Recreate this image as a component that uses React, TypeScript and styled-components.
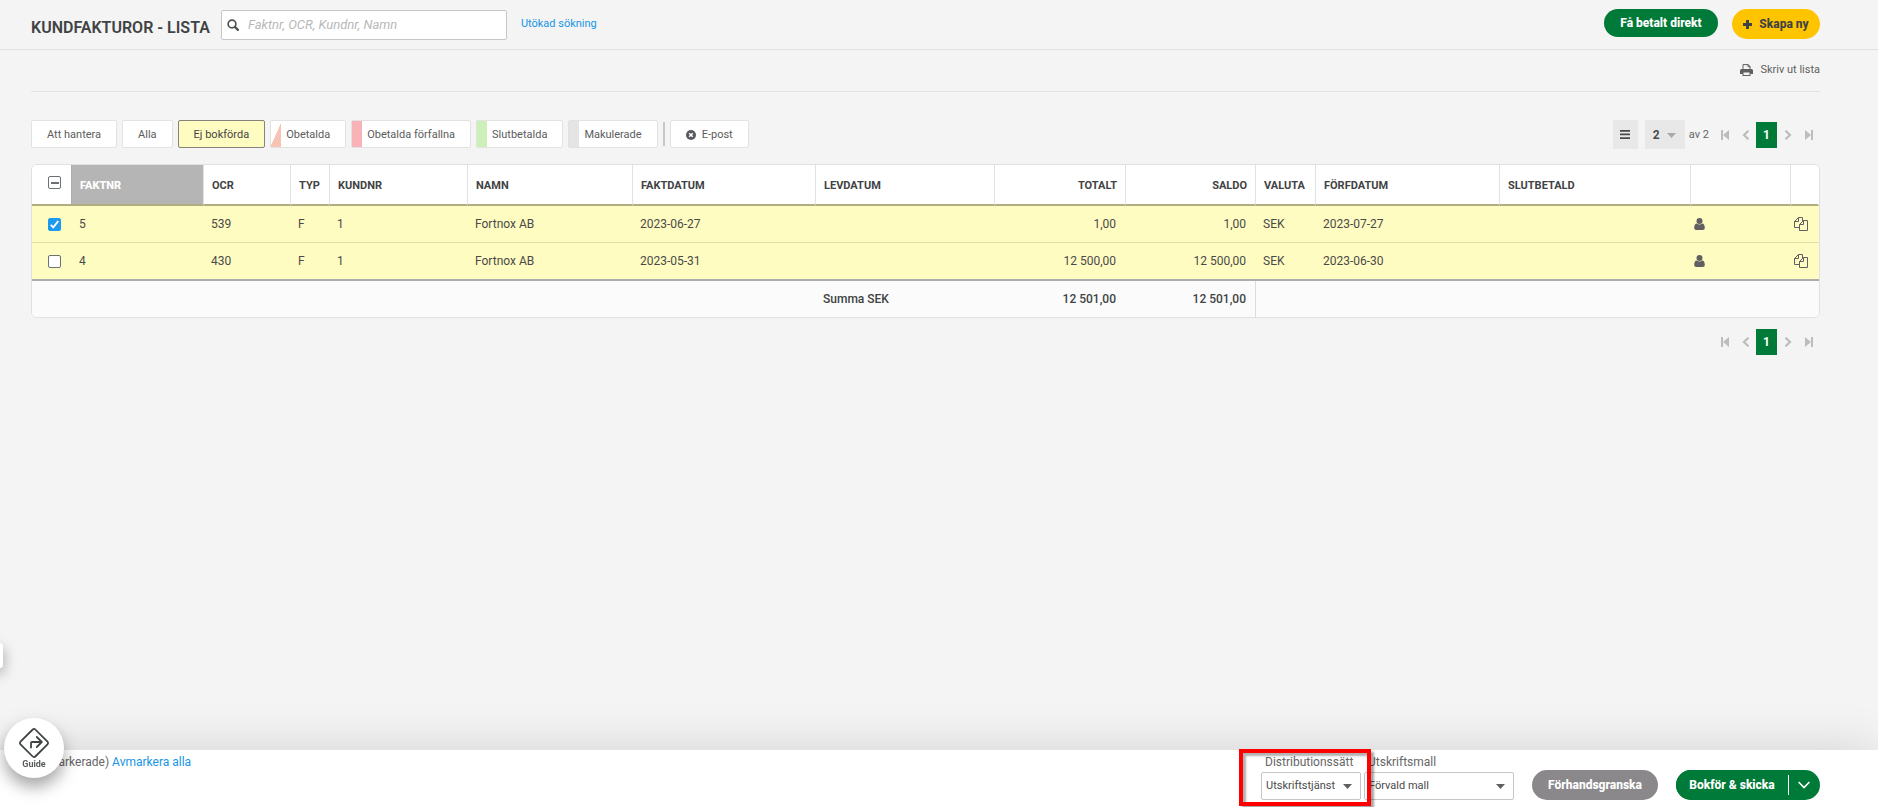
import React from 'react';
import styled, { createGlobalStyle, css } from 'styled-components';

const GlobalStyle = createGlobalStyle`
  *, *::before, *::after { box-sizing: border-box; }
  body {
    margin: 0;
    background: #f4f4f4;
    color: #4a4a4a;
    font-family: Roboto, "Liberation Sans", sans-serif;
    font-size: 12px;
    line-height: 16px;
  }
  button, input, select { font: inherit; color: inherit; margin: 0; }
  button { cursor: pointer; }
  a { color: #1795e6; text-decoration: none; }
  svg { display: block; flex: none; }
`;

const Page = styled.div`
  min-height: 100vh;
  display: flex;
  flex-direction: column;
  overflow-x: clip;
`;

const TopBar = styled.header`
  display: flex;
  align-items: flex-start;
  height: 50px;
  padding: 9px 58px 0 31px;
  border-bottom: 1px solid #e2e2e2;
`;

const Title = styled.h1`
  margin: 9px 11px 0 0;
  font-size: 16px;
  line-height: 20px;
  font-weight: 600;
  color: #3f4344;
  white-space: nowrap;
`;

const SearchBox = styled.label`
  display: flex;
  align-items: center;
  gap: 9px;
  width: 286px;
  height: 30px;
  margin-top: 1px;
  padding: 0 5px;
  background: #fff;
  border: 1px solid #c6c6c6;
  border-radius: 2px;
  color: #4f5354;
`;

const SearchInput = styled.input`
  flex: 1;
  min-width: 0;
  padding: 0;
  border: 0;
  outline: 0;
  background: none;
  font-size: 13px;
  &::placeholder { color: #b9b9b9; font-style: italic; opacity: 1; }
`;

const AdvancedLink = styled.a`
  margin: 7px auto 0 14px;
  font-size: 11px;
`;

const Actions = styled.div`
  display: flex;
  align-items: flex-start;
  gap: 14px;
`;

const tones = {
  green: css`background: #007a38; color: #fff;`,
  yellow: css`background: #ffc400; color: #3f4344;`,
  grey: css`background: #8a888b; color: #fff;`,
};

const Pill = styled.button<{ $tone: keyof typeof tones; $width: number; $small?: boolean }>`
  display: inline-flex;
  align-items: center;
  justify-content: center;
  gap: 7px;
  height: ${p => (p.$small ? 28 : 30)}px;
  min-width: ${p => p.$width}px;
  padding: 0 8px;
  border: 0;
  border-radius: 15px;
  font-size: 12px;
  font-weight: 800;
  white-space: nowrap;
  ${p => tones[p.$tone]}
`;

const Content = styled.main`
  flex: 1;
  padding: 0 58px 40px 31px;
`;

const Tools = styled.div`
  display: flex;
  justify-content: flex-end;
  height: 42px;
  padding-top: 12px;
  border-bottom: 1px solid #e2e2e2;
`;

const PrintButton = styled.button`
  display: flex;
  align-items: center;
  gap: 7px;
  height: 16px;
  padding: 0;
  border: 0;
  background: none;
  font-size: 11px;
  color: #5f5f5f;
`;

const FilterRow = styled.div`
  display: flex;
  justify-content: space-between;
  align-items: flex-start;
  padding: 28px 0 15px;
`;

const Filters = styled.div`
  display: flex;
  align-items: center;
  gap: 5px;
`;

const FilterButton = styled.button<{ $active?: boolean; $mark?: string }>`
  display: flex;
  align-items: center;
  justify-content: center;
  gap: 6px;
  height: 28px;
  padding: 2px 15px 0;
  border: 1px solid ${p => (p.$active ? '#85837c' : '#e2e2e2')};
  border-radius: 2px;
  background: ${p => (p.$active ? '#fffcc1' : '#fff')};
  color: ${p => (p.$active ? '#444' : '#5c5c5c')};
  font-size: 11px;
  white-space: nowrap;
  ${p => p.$mark && css`
    background: ${p.$mark} left bottom / 10px 100% no-repeat, #fff;
  `}
`;

const FilterDivider = styled.span`
  width: 2px;
  height: 24px;
  background: #c8c8c8;
`;

const PagerRow = styled.div`
  display: flex;
  align-items: center;
  height: 29px;
`;

const BottomPager = styled(PagerRow)`
  justify-content: flex-end;
  margin-top: 9px;
`;

const Square = styled.button`
  display: grid;
  place-items: center;
  width: 25px;
  height: 29px;
  margin-right: 7px;
  padding: 0;
  border: 0;
  background: #e8e8e8;
`;

const SelectWrap = styled.span<{ $width: number }>`
  position: relative;
  display: block;
  width: ${p => p.$width}px;
  > svg { position: absolute; right: 9px; top: 50%; margin-top: -2px; pointer-events: none; }
`;

const PageSelect = styled.select`
  appearance: none;
  display: block;
  width: 100%;
  height: 29px;
  padding: 0 8px;
  border: 0;
  border-radius: 0;
  background: #e8e8e8;
  font-weight: 700;
`;

const OfTotal = styled.span`
  margin: 0 5px 0 4px;
  font-size: 11px;
  color: #666;
`;

const PagerButton = styled.button<{ $current?: boolean }>`
  display: grid;
  place-items: center;
  width: 21px;
  height: 26px;
  padding: 0;
  border: 0;
  background: ${p => (p.$current ? '#007a38' : 'none')};
  color: ${p => (p.$current ? '#fff' : '#bdbdbd')};
  font-weight: 700;
`;

const PagerGroup = styled.nav`
  display: flex;
  align-items: center;
  margin-right: 1px;
`;

const TableFrame = styled.div`
  border: 1px solid #e0e0e0;
  border-radius: 6px;
  overflow: hidden;
`;

const Table = styled.table`
  width: 100%;
  table-layout: fixed;
  border-collapse: separate;
  border-spacing: 0;
  background: #fff;
`;

const Th = styled.th<{ $right?: boolean; $sorted?: boolean; $edge?: string }>`
  height: 41px;
  padding: 2px 8px 0;
  border-bottom: 2px solid #b0ad7e;
  border-right: 1px solid ${p => p.$edge ?? '#e2e2e2'};
  background: ${p => (p.$sorted ? '#b5b5b5' : '#fff')};
  color: ${p => (p.$sorted ? '#fff' : '#3f4344')};
  font-size: 11px;
  font-weight: ${p => (p.$sorted ? 800 : 700)};
  text-align: ${p => (p.$right ? 'right' : 'left')};
  white-space: nowrap;
`;

const Td = styled.td<{ $right?: boolean }>`
  height: 37px;
  padding: 0 10px 0 7px;
  background: #fffcc1;
  border-bottom: 1px solid #e0dda9;
  text-align: ${p => (p.$right ? 'right' : 'left')};
  white-space: nowrap;
  tr:last-child > & { height: 38px; border-bottom: 2px solid #acacac; }
`;

const FootCell = styled.td<{ $right?: boolean; $line?: boolean }>`
  height: 36px;
  padding: 0 ${p => (p.$line ? 9 : 10)}px 0 7px;
  background: #fbfbfb;
  border-right: ${p => (p.$line ? '1px solid #dcdcdc' : '0')};
  color: #3f4344;
  font-weight: 500;
  text-align: ${p => (p.$right ? 'right' : 'left')};
`;

const Check = styled.input`
  appearance: none;
  display: block;
  width: 13px;
  height: 13px;
  margin: 0 0 0 9px;
  border: 1px solid #6b7072;
  border-radius: 2px;
  background: #fff center / 11px 11px no-repeat;
  &:checked {
    border-color: #1c9af0;
    background-color: #1c9af0;
    background-image: url("data:image/svg+xml,%3Csvg xmlns='http://www.w3.org/2000/svg' viewBox='0 0 11 11'%3E%3Cpath d='M1.8 5.8l2.5 2.5 5-6.3' fill='none' stroke='white' stroke-width='1.9'/%3E%3C/svg%3E");
  }
  &:indeterminate {
    background-image: linear-gradient(#6b7072, #6b7072);
    background-size: 8px 2px;
  }
`;

const HeadCheck = styled(Check)`
  margin: 0 0 6px 8px;
`;

const IconButton = styled.button`
  display: block;
  padding: 0;
  border: 0;
  background: none;
  color: #625f62;
`;

const RowIcon = styled(IconButton)`
  margin-left: -4px;
`;

const BottomBar = styled.footer`
  position: sticky;
  bottom: 0;
  display: flex;
  align-items: flex-start;
  min-height: 57px;
  padding: 4px 58px 0 48px;
  background: #fff;
  box-shadow: 0 0 50px rgba(0, 0, 0, 0.14);
`;

const Selection = styled.p`
  margin: 0 auto 0 0;
  color: #666;
`;

const Fields = styled.div`
  display: flex;
  gap: 3px;
  margin-right: 18px;
`;

const Field = styled.label`
  position: relative;
  display: block;
`;

const FieldLabel = styled.span`
  display: block;
  margin-bottom: 2px;
  padding-left: 4px;
  color: #666;
`;

const FieldSelect = styled.select`
  appearance: none;
  display: block;
  width: 100%;
  height: 28px;
  padding: 0 4px;
  border: 1px solid #c6c6c6;
  border-radius: 2px;
  background: #fff;
  font-size: 11px;
`;

const Highlight = styled.span`
  position: absolute;
  z-index: 1;
  inset: -5px -10px -6px -22px;
  border: 4px solid #fe0000;
  box-shadow: 3px 3px 2px rgba(0, 0, 0, 0.35), inset 3px 3px 2px rgba(0, 0, 0, 0.3);
  pointer-events: none;
`;

const FooterActions = styled.div`
  display: flex;
  gap: 18px;
  padding-top: 16px;
`;

const Split = styled.div`
  display: flex;
  border-radius: 15px;
  overflow: hidden;
  background: #007a38;
`;

const SplitMain = styled(Pill)`
  border-radius: 0;
`;

const SplitToggle = styled.button`
  display: flex;
  align-items: center;
  gap: 9px;
  height: 30px;
  padding: 0 10px 0 0;
  border: 0;
  background: none;
  color: #fff;
  &::before { content: ''; width: 1px; height: 20px; background: #fff; }
`;

const GuideButton = styled.button`
  position: fixed;
  z-index: 2;
  left: 4px;
  bottom: 29px;
  display: flex;
  flex-direction: column;
  align-items: center;
  width: 60px;
  height: 60px;
  padding: 10px 0 0;
  border: 0;
  border-radius: 50%;
  background: #fff;
  box-shadow: 0 9px 16px rgba(0, 0, 0, 0.35);
  font-size: 9px;
  line-height: 12px;
  font-weight: 700;
  color: #5a5d5e;
`;

const SideTab = styled.span`
  position: fixed;
  left: -10px;
  bottom: 139px;
  width: 13px;
  height: 25px;
  border-radius: 3px;
  background: #fff;
  box-shadow: 0 5px 14px rgba(0, 0, 0, 0.35);
`;

const Caret = ({ color = '#625f62' }: { color?: string }) => (
  <svg width="9" height="5" viewBox="0 0 9 5" fill={color} aria-hidden="true"><path d="M0 0h9L4.5 5z" /></svg>
);

const SearchIcon = () => (
  <svg width="12" height="12" viewBox="0 0 12 12" fill="none" stroke="currentColor" aria-hidden="true">
    <circle cx="5" cy="5" r="3.9" strokeWidth="1.7" />
    <path d="M7.9 7.9l3 3" strokeWidth="2.2" strokeLinecap="round" />
  </svg>
);

const PlusIcon = () => (
  <svg width="9" height="9" viewBox="0 0 9 9" fill="currentColor" aria-hidden="true">
    <path d="M3 0h3v3h3v3H6v3H3V6H0V3h3z" />
  </svg>
);

const PrintIcon = () => (
  <svg width="13" height="12" viewBox="0 0 13 12" aria-hidden="true">
    <path fill="#625f62" fillRule="evenodd" d="M1.5 5H11.5A1.5 1.5 0 0 1 13 6.5V10H10.5V12H2.5V10H0V6.5A1.5 1.5 0 0 1 1.5 5zM3.5 8.5V11H9.5V8.5z" />
    <path fill="none" stroke="#625f62" d="M3 5.5V.6H8.3L10 2.3V5.5M8 .6V2.7H10" />
  </svg>
);

const CloseCircle = () => (
  <svg width="10" height="10" viewBox="0 0 10 10" aria-hidden="true">
    <circle cx="5" cy="5" r="5" fill="#5a5a5e" />
    <path d="M3.2 3.2l3.6 3.6M6.8 3.2L3.2 6.8" stroke="#fff" strokeWidth="1.5" />
  </svg>
);

const ListIcon = () => (
  <svg width="10" height="9" viewBox="0 0 10 9" fill="#4a484a" aria-hidden="true">
    <path d="M0 0h10v1.7H0zM0 3.6h10v1.7H0zM0 7.2h10V9H0z" />
  </svg>
);

const UserIcon = () => (
  <svg width="11" height="12" viewBox="0 0 11 12" fill="currentColor" aria-hidden="true">
    <path d="M2.9 5.4C1 5.4.2 7.4.2 9.7.2 11 1 12 2.2 12h6.6c1.2 0 2-1 2-2.3 0-2.3-.8-4.3-2.7-4.3-.7.7-1.6 1.1-2.6 1.1S3.6 6.1 2.9 5.4z" />
    <circle cx="5.5" cy="3" r="3" />
  </svg>
);

const CopyIcon = () => (
  <svg width="14" height="14" viewBox="0 0 14 14" fill="none" stroke="currentColor" aria-hidden="true">
    <path d="M5.5 10.5h-5v-6l4-4h4V4M4.5.5v4h-4" />
    <path d="M9.5 3.5h4v10h-8v-6zM9.5 3.5v4h-4" />
  </svg>
);

const EdgeIcon = ({ flip }: { flip?: boolean }) => (
  <svg width="8" height="10" viewBox="0 0 8 10" fill="currentColor" aria-hidden="true">
    {flip
      ? <path d="M6 0h2v10H6zM0 0L6 5 0 10z" />
      : <path d="M0 0h2v10H0zM8 0L2 5l6 5z" />}
  </svg>
);

const ArrowIcon = ({ flip }: { flip?: boolean }) => (
  <svg width="8" height="10" viewBox="0 0 8 10" fill="none" stroke="currentColor" strokeWidth="2.2" aria-hidden="true">
    <path d={flip ? 'M1.5 .7L6 5 1.5 9.3' : 'M6.5 .7L2 5l4.5 4.3'} />
  </svg>
);

const GuideIcon = () => (
  <svg width="30" height="30" viewBox="0 0 30 30" fill="none" stroke="#3f4344" strokeWidth="1.8" strokeLinejoin="round" strokeLinecap="round" aria-hidden="true">
    <path d="M13.7 1.5a1.8 1.8 0 0 1 2.6 0L28.5 13.7a1.8 1.8 0 0 1 0 2.6L16.3 28.5a1.8 1.8 0 0 1-2.6 0L1.5 16.3a1.8 1.8 0 0 1 0-2.6z" />
    <path d="M12 19.5v-4.5a1 1 0 0 1 1-1h9M17.8 9l5 5-5 5" />
  </svg>
);

const Pager = () => (
  <PagerGroup aria-label="Sidor">
    <PagerButton aria-label="Första"><EdgeIcon /></PagerButton>
    <PagerButton aria-label="Föregående"><ArrowIcon /></PagerButton>
    <PagerButton $current>1</PagerButton>
    <PagerButton aria-label="Nästa"><ArrowIcon flip /></PagerButton>
    <PagerButton aria-label="Sista"><EdgeIcon flip /></PagerButton>
  </PagerGroup>
);

const filters: { label: string; active?: boolean; mark?: string }[] = [
  { label: 'Att hantera' },
  { label: 'Alla' },
  { label: 'Ej bokförda', active: true },
  { label: 'Obetalda', mark: 'linear-gradient(114deg, transparent 50%, #f9c3b4 51%)' },
  { label: 'Obetalda förfallna', mark: 'linear-gradient(#f9b3b6, #f9b3b6)' },
  { label: 'Slutbetalda', mark: 'linear-gradient(#cdf0b9, #cdf0b9)' },
  { label: 'Makulerade', mark: 'linear-gradient(#e4e4e4, #e4e4e4)' },
];

const columnWidths = [40, 132, 87, 39, 138, 165, 183, 179, 131, 130, 60, 184, 191, 100, 28];

const columns: { label: string; right?: boolean; sorted?: boolean }[] = [
  { label: 'FAKTNR', sorted: true },
  { label: 'OCR' },
  { label: 'TYP' },
  { label: 'KUNDNR' },
  { label: 'NAMN' },
  { label: 'FAKTDATUM' },
  { label: 'LEVDATUM' },
  { label: 'TOTALT', right: true },
  { label: 'SALDO', right: true },
  { label: 'VALUTA' },
  { label: 'FÖRFDATUM' },
  { label: 'SLUTBETALD' },
];

const invoices = [
  { nr: '5', ocr: '539', date: '2023-06-27', amount: '1,00', due: '2023-07-27', checked: true },
  { nr: '4', ocr: '430', date: '2023-05-31', amount: '12\u00a0500,00', due: '2023-06-30', checked: false },
];

export default function App() {
  return (
    <>
      <GlobalStyle />
      <Page>
        <TopBar>
          <Title>KUNDFAKTUROR - LISTA</Title>
          <SearchBox>
            <SearchIcon />
            <SearchInput type="search" aria-label="Sök" placeholder="Faktnr, OCR, Kundnr, Namn" />
          </SearchBox>
          <AdvancedLink href="#sok">Utökad sökning</AdvancedLink>
          <Actions>
            <Pill $tone="green" $small $width={114}>Få betalt direkt</Pill>
            <Pill $tone="yellow" $width={88}><PlusIcon />Skapa ny</Pill>
          </Actions>
        </TopBar>

        <Content>
          <Tools>
            <PrintButton><PrintIcon />Skriv ut lista</PrintButton>
          </Tools>

          <FilterRow>
            <Filters>
              {filters.map(f => (
                <FilterButton key={f.label} $active={f.active} $mark={f.mark}>{f.label}</FilterButton>
              ))}
              <FilterDivider />
              <FilterButton><CloseCircle />E-post</FilterButton>
            </Filters>
            <PagerRow>
              <Square aria-label="Kolumner"><ListIcon /></Square>
              <SelectWrap $width={40}>
                <PageSelect aria-label="Antal per sida"><option>2</option></PageSelect>
                <Caret color="#aaa" />
              </SelectWrap>
              <OfTotal>av 2</OfTotal>
              <Pager />
            </PagerRow>
          </FilterRow>

          <TableFrame>
            <Table>
              <colgroup>
                {columnWidths.map((w, i) => <col key={i} width={w} />)}
              </colgroup>
              <thead>
                <tr>
                  <Th $edge="#adadad">
                    <HeadCheck
                      type="checkbox"
                      aria-label="Markera alla"
                      ref={(el: HTMLInputElement | null) => { if (el) el.indeterminate = true; }}
                    />
                  </Th>
                  {columns.map(c => (
                    <Th key={c.label} $right={c.right} $sorted={c.sorted}>{c.label}</Th>
                  ))}
                  <Th />
                  <Th $edge="#fff" />
                </tr>
              </thead>
              <tbody>
                {invoices.map(r => (
                  <tr key={r.nr}>
                    <Td><Check type="checkbox" aria-label={`Markera ${r.nr}`} defaultChecked={r.checked} /></Td>
                    <Td>{r.nr}</Td>
                    <Td>{r.ocr}</Td>
                    <Td>F</Td>
                    <Td>1</Td>
                    <Td>Fortnox AB</Td>
                    <Td>{r.date}</Td>
                    <Td />
                    <Td $right>{r.amount}</Td>
                    <Td $right>{r.amount}</Td>
                    <Td>SEK</Td>
                    <Td>{r.due}</Td>
                    <Td />
                    <Td><RowIcon aria-label="Kund"><UserIcon /></RowIcon></Td>
                    <Td><RowIcon aria-label="Kopiera"><CopyIcon /></RowIcon></Td>
                  </tr>
                ))}
              </tbody>
              <tfoot>
                <tr>
                  <FootCell colSpan={7} />
                  <FootCell>Summa SEK</FootCell>
                  <FootCell $right>12&nbsp;501,00</FootCell>
                  <FootCell $right $line>12&nbsp;501,00</FootCell>
                  <FootCell colSpan={5} />
                </tr>
              </tfoot>
            </Table>
          </TableFrame>

          <BottomPager><Pager /></BottomPager>
        </Content>

        <BottomBar>
          <Selection>markerade) <a href="#avmarkera">Avmarkera alla</a></Selection>
          <Fields>
            <Field>
              <FieldLabel>Distributionssätt</FieldLabel>
              <SelectWrap $width={100}>
                <FieldSelect><option>Utskriftstjänst</option></FieldSelect>
                <Caret />
              </SelectWrap>
              <Highlight />
            </Field>
            <Field>
              <FieldLabel>Utskriftsmall</FieldLabel>
              <SelectWrap $width={150}>
                <FieldSelect><option>Förvald mall</option></FieldSelect>
                <Caret />
              </SelectWrap>
            </Field>
          </Fields>
          <FooterActions>
            <Pill $tone="grey" $width={126}>Förhandsgranska</Pill>
            <Split>
              <SplitMain $tone="green" $width={112}>Bokför &amp; skicka</SplitMain>
              <SplitToggle aria-label="Fler val">
                <svg width="12" height="8" viewBox="0 0 12 8" fill="none" stroke="currentColor" strokeWidth="1.6" aria-hidden="true">
                  <path d="M.6 1L6 6.5 11.4 1" />
                </svg>
              </SplitToggle>
            </Split>
          </FooterActions>
        </BottomBar>

        <SideTab />
        <GuideButton><GuideIcon />Guide</GuideButton>
      </Page>
    </>
  );
}
